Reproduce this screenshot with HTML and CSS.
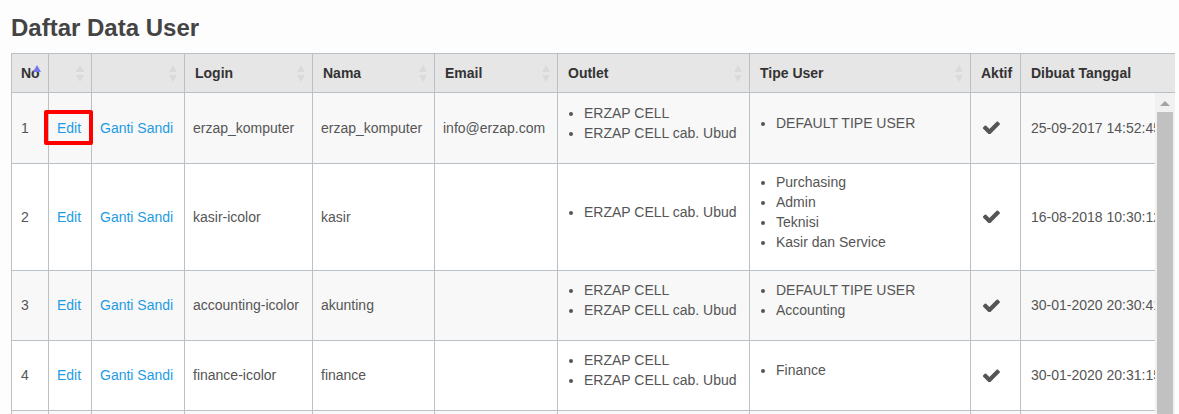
FILE: index.html
```html
<!DOCTYPE html>
<html lang="id">

<head>
    <meta charset="UTF-8">
    <meta name="viewport" content="width=device-width, initial-scale=1.0">
    <title>Daftar Data User</title>
    <link rel="stylesheet" href="styles.css">
</head>

<body>
    <div class="page">
        <h2>Daftar Data User</h2>

        <div class="grid">
            <div class="grid-head">
                <table class="tbl">
                    <colgroup>
                        <col class="c-no"><col class="c-edit"><col class="c-sandi"><col class="c-login"><col class="c-nama">
                        <col class="c-email"><col class="c-outlet"><col class="c-tipe"><col class="c-aktif"><col class="c-tgl">
                    </colgroup>
                    <thead>
                        <tr>
                            <th>No<span class="sort asc"></span></th>
                            <th><span class="sort"></span></th>
                            <th><span class="sort"></span></th>
                            <th>Login<span class="sort"></span></th>
                            <th>Nama<span class="sort"></span></th>
                            <th>Email<span class="sort"></span></th>
                            <th>Outlet<span class="sort"></span></th>
                            <th>Tipe User<span class="sort"></span></th>
                            <th>Aktif</th>
                            <th>Dibuat Tanggal</th>
                        </tr>
                    </thead>
                </table>
            </div>

            <div class="grid-body">
                <div class="grid-scroll">
                    <table class="tbl">
                        <colgroup>
                            <col class="c-no"><col class="c-edit"><col class="c-sandi"><col class="c-login"><col class="c-nama">
                            <col class="c-email"><col class="c-outlet"><col class="c-tipe"><col class="c-aktif"><col class="c-tgl">
                        </colgroup>
                        <tbody>
                            <tr>
                                <td>1</td>
                                <td><a href="#" class="marked">Edit</a></td>
                                <td><a href="#">Ganti Sandi</a></td>
                                <td>erzap_komputer</td>
                                <td>erzap_komputer</td>
                                <td>info@erzap.com</td>
                                <td><ul><li>ERZAP CELL</li><li>ERZAP CELL cab. Ubud</li></ul></td>
                                <td><ul><li>DEFAULT TIPE USER</li></ul></td>
                                <td class="aktif"><svg class="check" viewBox="130 300 1550 1160"><path d="M1671 566q0 40-28 68l-724 724-136 136q-28 28-68 28t-68-28l-136-136-362-362q-28-28-28-68t28-68l136-136q28-28 68-28t68 28l294 295 656-657q28-28 68-28t68 28l136 136q28 28 28 68z"/></svg></td>
                                <td class="tgl">25-09-2017 14:52:45</td>
                            </tr>
                            <tr>
                                <td>2</td>
                                <td><a href="#">Edit</a></td>
                                <td><a href="#">Ganti Sandi</a></td>
                                <td>kasir-icolor</td>
                                <td>kasir</td>
                                <td></td>
                                <td><ul><li>ERZAP CELL cab. Ubud</li></ul></td>
                                <td><ul><li>Purchasing</li><li>Admin</li><li>Teknisi</li><li>Kasir dan Service</li></ul></td>
                                <td class="aktif"><svg class="check" viewBox="130 300 1550 1160"><path d="M1671 566q0 40-28 68l-724 724-136 136q-28 28-68 28t-68-28l-136-136-362-362q-28-28-28-68t28-68l136-136q28-28 68-28t68 28l294 295 656-657q28-28 68-28t68 28l136 136q28 28 28 68z"/></svg></td>
                                <td class="tgl">16-08-2018 10:30:12</td>
                            </tr>
                            <tr>
                                <td>3</td>
                                <td><a href="#">Edit</a></td>
                                <td><a href="#">Ganti Sandi</a></td>
                                <td>accounting-icolor</td>
                                <td>akunting</td>
                                <td></td>
                                <td><ul><li>ERZAP CELL</li><li>ERZAP CELL cab. Ubud</li></ul></td>
                                <td><ul><li>DEFAULT TIPE USER</li><li>Accounting</li></ul></td>
                                <td class="aktif"><svg class="check" viewBox="130 300 1550 1160"><path d="M1671 566q0 40-28 68l-724 724-136 136q-28 28-68 28t-68-28l-136-136-362-362q-28-28-28-68t28-68l136-136q28-28 68-28t68 28l294 295 656-657q28-28 68-28t68 28l136 136q28 28 28 68z"/></svg></td>
                                <td class="tgl">30-01-2020 20:30:41</td>
                            </tr>
                            <tr>
                                <td>4</td>
                                <td><a href="#">Edit</a></td>
                                <td><a href="#">Ganti Sandi</a></td>
                                <td>finance-icolor</td>
                                <td>finance</td>
                                <td></td>
                                <td><ul><li>ERZAP CELL</li><li>ERZAP CELL cab. Ubud</li></ul></td>
                                <td><ul><li>Finance</li></ul></td>
                                <td class="aktif"><svg class="check" viewBox="130 300 1550 1160"><path d="M1671 566q0 40-28 68l-724 724-136 136q-28 28-68 28t-68-28l-136-136-362-362q-28-28-28-68t28-68l136-136q28-28 68-28t68 28l294 295 656-657q28-28 68-28t68 28l136 136q28 28 28 68z"/></svg></td>
                                <td class="tgl">30-01-2020 20:31:15</td>
                            </tr>
                            <tr>
                                <td>5</td>
                                <td><a href="#">Edit</a></td>
                                <td><a href="#">Ganti Sandi</a></td>
                                <td>gudang-icolor</td>
                                <td>gudang</td>
                                <td></td>
                                <td><ul><li>ERZAP CELL</li></ul></td>
                                <td><ul><li>Gudang</li></ul></td>
                                <td class="aktif"><svg class="check" viewBox="130 300 1550 1160"><path d="M1671 566q0 40-28 68l-724 724-136 136q-28 28-68 28t-68-28l-136-136-362-362q-28-28-28-68t28-68l136-136q28-28 68-28t68 28l294 295 656-657q28-28 68-28t68 28l136 136q28 28 28 68z"/></svg></td>
                                <td class="tgl">30-01-2020 20:32:02</td>
                            </tr>
                        </tbody>
                    </table>
                </div>
                <div class="scrollbar">
                    <span class="arrow-up"></span>
                    <span class="thumb"></span>
                </div>
            </div>
        </div>
    </div>
</body>

</html>
```

FILE: styles.css
```css
:root {
    --line: #b9c0c6;
    --head-bg: #e6e6e6;
    --stripe: #f8f8f8;
    --text: #555;
    --link: #1e9be4;
}

body {
    margin: 0;
    background-color: #fdfdfd;
    font-family: "Liberation Sans", Arial, sans-serif;
    font-size: 14px;
    color: var(--text);
}

.page {
    padding: 14px 4px 0 11px;
}

h2 {
    margin: 0 0 11px;
    font-size: 24px;
    line-height: 28px;
    font-weight: bold;
    color: #444;
}

.grid {
    width: 1164px;
}

.grid-head {
    overflow: hidden;
}

.tbl {
    width: 1164px;
    table-layout: fixed;
    border-collapse: collapse;
}

.c-no { width: 37px; }
.c-edit { width: 43px; }
.c-sandi { width: 93px; }
.c-login { width: 128px; }
.c-nama { width: 122px; }
.c-email { width: 123px; }
.c-outlet { width: 192px; }
.c-tipe { width: 221px; }
.c-aktif { width: 50px; }
.c-tgl { width: 155px; }

th {
    position: relative;
    background-color: var(--head-bg);
    border: 1px solid var(--line);
    border-right-width: 0;
    padding: 9px 10px 9px 9px;
    line-height: 20px;
    text-align: left;
    font-weight: bold;
    color: #333;
    white-space: nowrap;
}

th + th {
    border-left: 1px solid var(--line);
    padding-left: 10px;
}

.sort {
    position: absolute;
    right: 7px;
    top: 11px;
    display: flex;
    flex-direction: column;
    gap: 3px;
}

.sort::before,
.sort::after {
    content: "";
    border-left: 4px solid transparent;
    border-right: 4px solid transparent;
}

.sort::before {
    border-bottom: 7px solid #dadada;
}

.sort::after {
    border-top: 7px solid #dadada;
}

.sort.asc::before {
    border-bottom-color: #7474ee;
}

.sort.asc::after {
    border-top-color: transparent;
}

.grid-body {
    display: flex;
    height: 322px;
}

.grid-scroll {
    flex: 1;
    overflow: hidden;
}

tbody tr {
    height: 70px;
}

td {
    border: 1px solid var(--line);
    border-top-width: 0;
    padding: 8px;
    line-height: 20px;
    vertical-align: middle;
    white-space: nowrap;
}

td.aktif,
td.tgl {
    padding-left: 10px;
}

td:first-child {
    padding-left: 9px;
}

td:last-child {
    border-right-width: 0;
}

tbody tr:nth-child(odd) td {
    background-color: var(--stripe);
}

tbody tr:nth-child(even) td {
    background-color: #fff;
}

a {
    color: var(--link);
    text-decoration: none;
}

.marked {
    position: relative;
    display: inline-block;
}

.marked::after {
    content: "";
    position: absolute;
    left: -13px;
    right: -12px;
    top: -8px;
    bottom: -7px;
    border: 4px solid #f00;
    border-radius: 2px;
}

ul {
    margin: 0 0 10px;
    padding-left: 18px;
}

.check {
    display: block;
    width: 17px;
    height: 13px;
    margin-left: 2px;
    fill: #555;
}

.scrollbar {
    width: 20px;
    background-color: #f1f1f1;
    display: flex;
    flex-direction: column;
    align-items: center;
}

.arrow-up {
    margin: 8px 0 6px;
    border-left: 5px solid transparent;
    border-right: 5px solid transparent;
    border-bottom: 5px solid #a3a3a3;
}

.thumb {
    flex: 1;
    width: 16px;
    background-color: #c1c1c1;
}
```
